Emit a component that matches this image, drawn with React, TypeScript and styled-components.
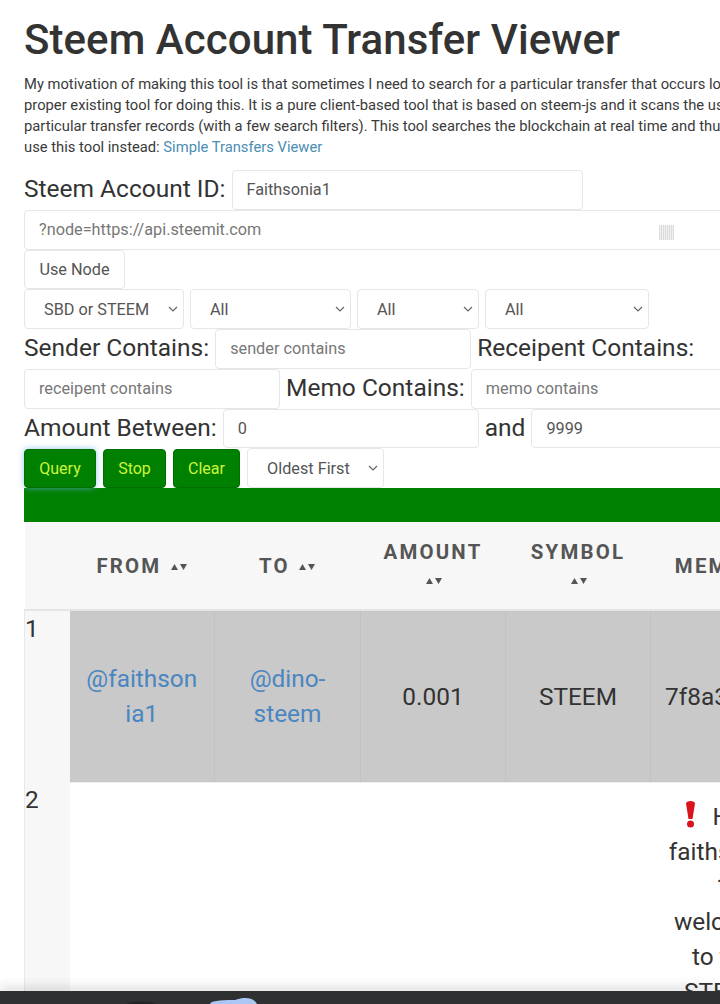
import React from 'react';
import styled, { createGlobalStyle } from 'styled-components';

const GlobalStyle = createGlobalStyle`
  html, body {
    margin: 0;
    padding: 0;
    background: #fff;
  }
  body {
    font-family: Roboto, "Liberation Sans", sans-serif;
    color: #333;
  }
`;

const Screen = styled.div`
  position: relative;
  width: 720px;
  height: 1004px;
  overflow: hidden;
`;

const Page = styled.div`
  width: 1000px;
  padding: 17px 0 0 24px;
`;

const Title = styled.h1`
  margin: 0;
  font-size: 42px;
  line-height: 46px;
  font-weight: 500;
  letter-spacing: 0.07px;
  color: #333;
`;

const Intro = styled.p`
  margin: 11px 0 12px;
  font-size: 14.75px;
  line-height: 21px;
  white-space: nowrap;
  color: #3a3a3a;

  a {
    color: #4a8db3;
    text-decoration: none;
  }
`;

const Row = styled.div<{ $gap?: number }>`
  display: flex;
  align-items: center;
  gap: ${p => p.$gap ?? 6}px;
  height: 39.75px;
`;

const Label = styled.label`
  padding-bottom: 2px;
  font-size: 24.5px;
  line-height: 37px;
  white-space: nowrap;
  color: #333;
`;

const Field = styled.input<{ $width: number }>`
  box-sizing: border-box;
  flex: none;
  width: ${p => p.$width}px;
  height: 39.75px;
  padding: 0 14px;
  border: 1px solid #e6e6e6;
  border-radius: 4px;
  background: #fff;
  font: 16.25px Roboto, sans-serif;
  color: #555;
  outline: none;

  &::placeholder {
    color: #777;
    opacity: 1;
  }
`;

const NodeField = styled.div`
  position: relative;
  display: flex;
`;

const AutofillMark = styled.span`
  position: absolute;
  left: 635px;
  top: 15px;
  width: 15px;
  height: 15px;
  background: repeating-linear-gradient(90deg, #dcdcdc 0 1px, #f0f0f0 1px 2px);
`;

const Plain = styled.button`
  box-sizing: border-box;
  width: 101px;
  height: 39.75px;
  padding: 0;
  border: 1px solid #e6e6e6;
  border-radius: 4px;
  background: #fff;
  font: 16.25px Roboto, sans-serif;
  color: #555;
`;

const Action = styled.button<{ $width: number; $focus?: boolean }>`
  box-sizing: border-box;
  width: ${p => p.$width}px;
  height: 39px;
  padding: 0;
  border: 1px solid #006f00;
  border-radius: 4px;
  background: #008000;
  font: 16px Roboto, sans-serif;
  color: #ccf53a;
  box-shadow: ${p => (p.$focus ? '0 0 6px rgba(102, 175, 233, 0.7)' : 'none')};
`;

const chevron =
  "data:image/svg+xml,%3Csvg xmlns='http://www.w3.org/2000/svg' viewBox='0 0 10 6'%3E%3Cpath d='M1 1l4 4 4-4' fill='none' stroke='%23666' stroke-width='1.200'/%3E%3C/svg%3E";

const Select = styled.select<{ $width: number }>`
  box-sizing: border-box;
  flex: none;
  width: ${p => p.$width}px;
  height: 39.75px;
  padding: 0 0 0 19px;
  border: 1px solid #e6e6e6;
  border-radius: 4px;
  appearance: none;
  background: #fff url("${chevron}") no-repeat right 5px center / 10px 6px;
  font: 16.25px Roboto, sans-serif;
  color: #555;
`;

const GreenBar = styled.div`
  width: 100%;
  height: 34px;
  background: #008000;
`;

const Table = styled.table`
  width: 976px;
  table-layout: fixed;
  border-collapse: collapse;
  font-size: 24.4px;
  line-height: 35px;
  color: #333;
`;

const HeadCell = styled.th`
  height: 88px;
  padding: 8px 14px;
  box-sizing: border-box;
  background: #f7f7f7;
  border-bottom: 2px solid #e4e4e4;
  font-size: 20.4px;
  font-weight: 700;
  line-height: 28px;
  letter-spacing: 2.2px;
  color: #555;
  text-align: center;
  white-space: normal;
`;

const IndexCell = styled.td`
  padding: 0;
  vertical-align: top;
  background: #f7f7f7;
  border-left: 1px solid #e8e8e8;
`;

const DataCell = styled.td<{ $active?: boolean }>`
  padding: 16px 14px;
  text-align: center;
  vertical-align: middle;
  background: ${p => (p.$active ? '#c9c9c9' : '#fff')};
  border-right: 1px solid ${p => (p.$active ? '#c2c2c2' : '#fff')};
  border-bottom: 1px solid #eee;
  overflow-wrap: anywhere;

  a {
    color: #4a86c0;
    text-decoration: none;
  }
`;

const TallRow = styled.tr<{ $height: number }>`
  height: ${p => p.$height}px;
`;

const MemoTop = styled(DataCell)`
  vertical-align: top;
`;

const SortGlyph = styled.svg`
  width: 18px;
  height: 8px;
  margin-left: 1px;
  vertical-align: 2px;
  fill: #555;
`;

const AlertGlyph = styled.svg`
  width: 11px;
  height: 27px;
  margin-right: 16px;
  vertical-align: -3px;
`;

const BottomBar = styled.div`
  position: absolute;
  left: 0;
  right: 0;
  bottom: 0;
  height: 13px;
  background: #2f3032;
  box-shadow: 0 -6px 10px rgba(0, 0, 0, 0.1);
`;

const BarCloud = styled.svg`
  position: absolute;
  left: 210px;
  top: 7px;
  width: 48px;
  height: 6px;
`;

const BarArc = styled.svg`
  position: absolute;
  left: 126px;
  top: 10px;
  width: 30px;
  height: 3px;
`;

const SortIcon = () => (
  <SortGlyph viewBox="0 0 18 8" aria-hidden="true">
    <path d="M4.500 1 8 7H1zM10 1h7l-3.500 6z" />
  </SortGlyph>
);

const AlertIcon = () => (
  <AlertGlyph viewBox="0 0 11 27" aria-hidden="true">
    <path d="M1 2.500C1 1 3 0 5.500 0S10 1 10 2.500L7.500 18h-4z" fill="#d9141c" />
    <circle cx="5.500" cy="23" r="3.500" fill="#d9141c" />
  </AlertGlyph>
);

const columns = [45, 145, 146, 145, 145, 145, 205];

const App = () => (
  <>
    <GlobalStyle />
    <Screen>
      <Page>
        <Title>Steem Account Transfer Viewer</Title>
        <Intro>
          My motivation of making this tool is that sometimes I need to search for a particular transfer that occurs long time ago and there is no
          <br />
          proper existing tool for doing this. It is a pure client-based tool that is based on steem-js and it scans the user's account history
          <br />
          particular transfer records (with a few search filters). This tool searches the blockchain at real time and thus it may be slow, you could
          <br />
          use this tool instead: <a href="#viewer">Simple Transfers Viewer</a>
        </Intro>

        <Row>
          <Label>Steem Account ID:</Label>
          <Field $width={351} defaultValue="Faithsonia1" />
        </Row>
        <NodeField>
          <Field $width={976} placeholder="?node=https://api.steemit.com" />
          <AutofillMark />
        </NodeField>
        <Row>
          <Plain>Use Node</Plain>
        </Row>
        <Row>
          <Select $width={160}><option>SBD or STEEM</option></Select>
          <Select $width={161}><option>All</option></Select>
          <Select $width={122}><option>All</option></Select>
          <Select $width={164}><option>All</option></Select>
        </Row>
        <Row>
          <Label>Sender Contains:</Label>
          <Field $width={256} placeholder="sender contains" />
          <Label>Receipent Contains:</Label>
        </Row>
        <Row>
          <Field $width={256} placeholder="receipent contains" />
          <Label>Memo Contains:</Label>
          <Field $width={400} placeholder="memo contains" />
        </Row>
        <Row>
          <Label>Amount Between:</Label>
          <Field $width={256} defaultValue="0" />
          <Label>and</Label>
          <Field $width={400} defaultValue="9999" />
        </Row>
        <Row $gap={7}>
          <Action $width={72} $focus>Query</Action>
          <Action $width={63}>Stop</Action>
          <Action $width={67}>Clear</Action>
          <Select $width={137}><option>Oldest First</option></Select>
        </Row>

        <GreenBar />

        <Table>
          <colgroup>
            {columns.map((w, i) => (
              <col key={i} width={w} />
            ))}
          </colgroup>
          <thead>
            <tr>
              <HeadCell />
              <HeadCell>FROM <SortIcon /></HeadCell>
              <HeadCell>TO <SortIcon /></HeadCell>
              <HeadCell>AMOUNT <SortIcon /></HeadCell>
              <HeadCell>SYMBOL <SortIcon /></HeadCell>
              <HeadCell>MEMO <SortIcon /></HeadCell>
              <HeadCell>DATE <SortIcon /></HeadCell>
            </tr>
          </thead>
          <tbody>
            <TallRow $height={172}>
              <IndexCell>1</IndexCell>
              <DataCell $active><a href="#from">@faithsonia1</a></DataCell>
              <DataCell $active><a href="#to">@dino-steem</a></DataCell>
              <DataCell $active>0.001</DataCell>
              <DataCell $active>STEEM</DataCell>
              <DataCell $active>7f8a3c01e</DataCell>
              <DataCell $active />
            </TallRow>
            <TallRow $height={400}>
              <IndexCell>2</IndexCell>
              <DataCell />
              <DataCell />
              <DataCell />
              <DataCell />
              <MemoTop>
                <AlertIcon />Hey!
                <br />
                faithsonia
                <br />
                1
                <br />
                welcome
                <br />
                to the
                <br />
                STEEM
              </MemoTop>
              <DataCell />
            </TallRow>
          </tbody>
        </Table>
      </Page>
      <BottomBar>
        <BarArc viewBox="0 0 30 3" aria-hidden="true">
          <path d="M1 3C5 0 25 0 29 3z" fill="#222325" />
        </BarArc>
        <BarCloud viewBox="0 0 48 6" aria-hidden="true">
          <path d="M0 6C1 3 8 2 24 2 27 2 29 0 35 0 41 0 45 2 47 6z" fill="#a9c7f2" />
        </BarCloud>
      </BottomBar>
    </Screen>
  </>
);

export default App;
